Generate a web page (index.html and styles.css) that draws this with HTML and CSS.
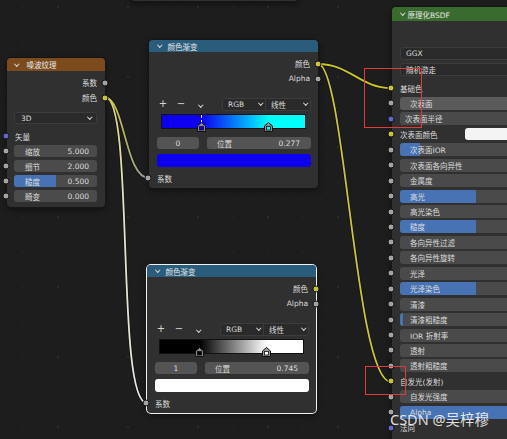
FILE: index.html
```html
<!DOCTYPE html>
<html>
<head>
<meta charset="utf-8">
<link rel="stylesheet" href="styles.css">
</head>
<body>
<div class="canvas">
  <svg class="links" width="507" height="439" viewBox="0 0 507 439">
    <defs>
      <linearGradient id="g1" gradientUnits="userSpaceOnUse" x1="105" y1="97" x2="149" y2="178">
        <stop offset="0" stop-color="#c9c626"/>
        <stop offset="1" stop-color="#9c9c9c"/>
      </linearGradient>
      <linearGradient id="g2" gradientUnits="userSpaceOnUse" x1="105" y1="97" x2="147" y2="403">
        <stop offset="0" stop-color="#d4d170"/>
        <stop offset="0.3" stop-color="#e4e2c4"/>
        <stop offset="1" stop-color="#e6e6e0"/>
      </linearGradient>
    </defs>
    <g class="wire-bg">
      <path d="M105,97 C125,100 125,178 149,178"/>
      <path d="M105,97 C135,97 115,403 147,403"/>
      <path d="M318,64 C350,64 360,88 391,88"/>
      <path d="M318,64 C345,64 355,382 391,382"/>
    </g>
    <path class="wire" stroke="url(#g1)" d="M105,97 C125,100 125,178 149,178"/>
    <path class="wire" stroke="url(#g2)" d="M105,97 C135,97 115,403 147,403"/>
    <path class="wire wire-y" d="M318,64 C350,64 360,88 391,88"/>
    <path class="wire wire-y" d="M318,64 C345,64 355,382 391,382"/>
  </svg>

  <div class="node stub"></div>

  <!-- Noise texture -->
  <div class="node noise">
    <div class="hdr h-tex"><span class="chev"></span>噪波纹理</div>
    <div class="nb nb-noise">
      <div class="sr out">系数<i class="sk g"></i></div>
      <div class="sr out">颜色<i class="sk y"></i></div>
      <div class="dd dd-noise"><span>3D</span><span class="chev"></span></div>
      <div class="sr in in-vec"><i class="sk p"></i>矢量</div>
      <div class="sr fr first"><i class="sk g"></i><div class="fld"><span>缩放</span><span>5.000</span></div></div>
      <div class="sr fr"><i class="sk g"></i><div class="fld"><span>细节</span><span>2.000</span></div></div>
      <div class="sr fr"><i class="sk g"></i><div class="fld"><i class="fill" style="width:50%"></i><span>糙度</span><span>0.500</span></div></div>
      <div class="sr fr"><i class="sk g"></i><div class="fld"><span>畸变</span><span>0.000</span></div></div>
    </div>
  </div>

  <!-- Color ramp 1 -->
  <div class="node ramp ramp1">
    <div class="hdr h-conv"><span class="chev"></span>颜色渐变</div>
    <div class="nb nb-ramp">
      <div class="sr out">颜色<i class="sk y"></i></div>
      <div class="sr out">Alpha<i class="sk g"></i></div>
      <div class="tb">
        <span class="tbb plus">+</span>
        <span class="tbb minus">−</span>
        <span class="tbb"><span class="chev"></span></span>
        <div class="ddg">
          <span class="seg seg1">RGB<span class="chev"></span></span>
          <span class="seg seg2">线性<span class="chev"></span></span>
        </div>
      </div>
      <div class="bar bar-blue">
        <i class="dash" style="left:27.7%"></i>
        <svg class="mk" style="left:27.7%" width="9" height="10" viewBox="0 0 9 10"><path d="M0.5,4 L4.5,0.5 L8.5,4 L8.5,9.5 L0.5,9.5 Z" fill="#8a8a8a" stroke="#111" stroke-width="1"/><rect x="2.5" y="4.5" width="4" height="3.5" fill="#0c00ee" stroke="#111" stroke-width="0.8"/></svg>
        <svg class="mk" style="left:74.5%" width="9" height="10" viewBox="0 0 9 10"><path d="M0.5,4 L4.5,0.5 L8.5,4 L8.5,9.5 L0.5,9.5 Z" fill="#8a8a8a" stroke="#111" stroke-width="1"/><rect x="2.5" y="4.5" width="4" height="3.5" fill="#00ffff" stroke="#111" stroke-width="0.8"/></svg>
      </div>
      <div class="vr">
        <div class="vf vidx">0</div>
        <div class="vf vpos"><span>位置</span><span>0.277</span></div>
      </div>
      <div class="sw sw-blue"></div>
      <div class="sr in in-fac"><i class="sk g"></i>系数</div>
    </div>
  </div>

  <!-- Color ramp 2 (active) -->
  <div class="node ramp ramp2">
    <div class="hdr h-conv"><span class="chev"></span>颜色渐变</div>
    <div class="nb nb-ramp">
      <div class="sr out">颜色<i class="sk y"></i></div>
      <div class="sr out">Alpha<i class="sk g"></i></div>
      <div class="tb">
        <span class="tbb plus">+</span>
        <span class="tbb minus">−</span>
        <span class="tbb"><span class="chev"></span></span>
        <div class="ddg">
          <span class="seg seg1">RGB<span class="chev"></span></span>
          <span class="seg seg2">线性<span class="chev"></span></span>
        </div>
      </div>
      <div class="bar bar-bw">
        <i class="dash" style="left:74.5%"></i>
        <svg class="mk" style="left:27.7%" width="9" height="10" viewBox="0 0 9 10"><path d="M0.5,4 L4.5,0.5 L8.5,4 L8.5,9.5 L0.5,9.5 Z" fill="#8a8a8a" stroke="#111" stroke-width="1"/><rect x="2.5" y="4.5" width="4" height="3.5" fill="#000" stroke="#111" stroke-width="0.8"/></svg>
        <svg class="mk" style="left:74.5%" width="9" height="10" viewBox="0 0 9 10"><path d="M0.5,4 L4.5,0.5 L8.5,4 L8.5,9.5 L0.5,9.5 Z" fill="#9a9a9a" stroke="#111" stroke-width="1"/><rect x="2.5" y="4.5" width="4" height="3.5" fill="#fff" stroke="#111" stroke-width="0.8"/></svg>
      </div>
      <div class="vr">
        <div class="vf vidx">1</div>
        <div class="vf vpos"><span>位置</span><span>0.745</span></div>
      </div>
      <div class="sw sw-white"></div>
      <div class="sr in in-fac"><i class="sk g"></i>系数</div>
    </div>
  </div>

  <!-- Principled BSDF -->
  <div class="node bsdf">
    <div class="hdr h-shader"><span class="chev"></span>原理化BSDF</div>
    <div class="nb nb-bsdf">
      <div class="dd dd-bsdf"><span>GGX</span></div>
      <div class="dd dd-bsdf dd-2"><span>随机游走</span></div>
      <div class="rows">
        <div class="br lab"><i class="sk y"></i>基础色</div>
        <div class="br"><i class="sk g"></i><div class="bf hov"><span>次表面</span></div></div>
        <div class="br"><i class="sk p"></i><div class="bf vec"><span>次表面半径</span></div></div>
        <div class="br lab"><i class="sk y"></i>次表面颜色<i class="bsw"></i></div>
        <div class="br"><i class="sk g"></i><div class="bf"><i class="fill" style="width:13%"></i><span>次表面IOR</span></div></div>
        <div class="br"><i class="sk g"></i><div class="bf"><span>次表面各向异性</span></div></div>
        <div class="br"><i class="sk g"></i><div class="bf"><span>金属度</span></div></div>
        <div class="br"><i class="sk g"></i><div class="bf"><i class="fill" style="width:50%"></i><span>高光</span></div></div>
        <div class="br"><i class="sk g"></i><div class="bf"><span>高光染色</span></div></div>
        <div class="br"><i class="sk g"></i><div class="bf"><i class="fill" style="width:50%"></i><span>糙度</span></div></div>
        <div class="br"><i class="sk g"></i><div class="bf"><span>各向异性过滤</span></div></div>
        <div class="br"><i class="sk g"></i><div class="bf"><span>各向异性旋转</span></div></div>
        <div class="br"><i class="sk g"></i><div class="bf"><span>光泽</span></div></div>
        <div class="br"><i class="sk g"></i><div class="bf"><i class="fill" style="width:50%"></i><span>光泽染色</span></div></div>
        <div class="br"><i class="sk g"></i><div class="bf"><span>清漆</span></div></div>
        <div class="br"><i class="sk g"></i><div class="bf"><i class="fill" style="width:2%"></i><span>清漆粗糙度</span></div></div>
        <div class="br"><i class="sk g"></i><div class="bf"><span>IOR 折射率</span></div></div>
        <div class="br"><i class="sk g"></i><div class="bf"><span>透射</span></div></div>
        <div class="br"><i class="sk g"></i><div class="bf"><span>透射粗糙度</span></div></div>
        <div class="br lab"><i class="sk y"></i>自发光(发射)</div>
        <div class="br"><i class="sk g"></i><div class="bf"><span>自发光强度</span></div></div>
        <div class="br"><i class="sk g"></i><div class="bf"><i class="fill" style="width:100%"></i><span>Alpha</span></div></div>
        <div class="br lab"><i class="sk p"></i>法向</div>
      </div>
    </div>
  </div>

  <div class="mark mark1"></div>
  <div class="mark mark2"></div>

  <div class="wm">CSDN @吴梓穆</div>
</div>
</body>
</html>
```

FILE: styles.css
```css
* { box-sizing: border-box; margin: 0; padding: 0; }

body {
  background: #1d1d1d;
  font-family: "DejaVu Sans", "Noto Sans CJK SC", sans-serif;
  font-size: 7.5px;
  color: #dcdcdc;
  overflow: hidden;
}

.canvas {
  position: relative;
  width: 507px;
  height: 439px;
  overflow: hidden;
  background-color: #1d1d1d;
  background-image:
    radial-gradient(circle at center, #2b2b2b 0, #2b2b2b 1px, transparent 1.6px),
    radial-gradient(circle at center, #232323 0, #232323 0.6px, transparent 1.1px);
  background-size: 70px 70px, 17.5px 17.5px;
  background-position: 93px -28px, 119.25px -1.75px;
}

/* links */
.links { position: absolute; left: 0; top: 0; z-index: 1; }
.wire-bg path { fill: none; stroke: #121212; stroke-width: 3.4; }
.wire { fill: none; stroke-width: 1.8; }
.wire-y { stroke: #cbc727; }

/* nodes */
.node {
  position: absolute;
  z-index: 2;
  background: #303030;
  border-radius: 4px;
  box-shadow: 0 0 0 1px #161616, 0 2px 6px rgba(0, 0, 0, 0.55);
}

.stub { left: 131px; top: -12px; width: 167px; height: 13px; }

.hdr {
  display: flex;
  align-items: center;
  border-radius: 4px 4px 0 0;
  color: #e6e6e6;
  white-space: nowrap;
}

.chev {
  display: inline-block;
  width: 3.5px;
  height: 3.5px;
  border-right: 1px solid #d8d8d8;
  border-bottom: 1px solid #d8d8d8;
  transform: translateY(-1px) rotate(45deg);
}
.hdr .chev { margin-right: 6px; }

.h-tex { background: #7b4a1d; height: 13px; padding-left: 8px; }
.h-conv { background: #2a5d7c; height: 12px; padding-left: 9px; }
.h-shader { background: #3a6b2e; height: 14px; padding-left: 9px; }
.h-shader .chev { margin-right: 3px; }
.h-tex .chev { margin-right: 8px; }

.nb { display: flex; flex-direction: column; }

/* socket rows */
.sr {
  position: relative;
  display: flex;
  align-items: center;
  white-space: nowrap;
}
.sr.out { justify-content: flex-end; height: 15px; padding-right: 8px; }
.sr.in { padding-left: 8px; }

.sk {
  position: absolute;
  top: 50%;
  width: 7px;
  height: 7px;
  border-radius: 50%;
  border: 1px solid #151515;
  transform: translate(-50%, -50%);
}
.sr.out .sk { right: -7px; }
.sr.in .sk, .sr.fr .sk { left: -1px; }
.sk.g { background: #a3a3a3; }
.sk.y { background: #c9c62a; }
.sk.p { background: #6464cc; }

/* dropdown */
.dd {
  display: flex;
  align-items: center;
  justify-content: space-between;
  background: #2a2a2a;
  border: 1px solid #3c3c3c;
  border-radius: 3px;
  color: #dcdcdc;
}
.dd-noise { margin: 7px 8px 0 7px; height: 12px; padding: 0 5px 0 6px; }

/* noise node */
.noise { left: 7px; top: 58px; width: 98px; }
.nb-noise { padding: 4px 0 5px; }
.in-vec { margin-top: 5px; height: 14px; }
.sr.fr { height: 12px; margin-top: 3px; padding: 0 8px 0 7px; }
.sr.fr.first { margin-top: 2px; }

.fld {
  position: relative;
  flex: 1;
  height: 12px;
  background: #4b4b4b;
  border-radius: 3px;
  display: flex;
  align-items: center;
  justify-content: space-between;
  padding: 0 8px 0 11px;
  overflow: hidden;
}
.fld span, .bf span, .vf span { position: relative; }
.fill {
  position: absolute;
  left: 0;
  top: 0;
  bottom: 0;
  background: #4772b3;
}

/* color ramp */
.ramp { width: 169px; }
.ramp1 { left: 149px; top: 40px; }
.ramp2 { left: 147px; top: 265px; box-shadow: 0 0 0 1px #f2f2f2, 0 2px 6px rgba(0, 0, 0, 0.55); }
.nb-ramp { padding: 4px 0 3px; }

.tb {
  display: flex;
  align-items: center;
  height: 14px;
  margin-top: 11px;
  padding-left: 8px;
}
.tbb {
  width: 12px;
  text-align: center;
  font-size: 10px;
  color: #d6d6d6;
  line-height: 14px;
}
.tbb.minus { margin-left: 6px; }
.tbb:nth-child(3) { margin-left: 8px; }
.ddg {
  display: flex;
  margin-left: 15px;
  height: 13px;
  background: #2a2a2a;
  border: 1px solid #3c3c3c;
  border-radius: 3px;
}
.seg {
  display: flex;
  align-items: center;
  justify-content: space-between;
  padding: 0 3px 0 5px;
}
.seg1 { width: 43px; border-right: 1px solid #3c3c3c; }
.seg2 { width: 44px; }

.bar {
  position: relative;
  height: 15px;
  margin: 3px 12px 0 12px;
  border: 1px solid #111;
}
.bar-blue { background: linear-gradient(to right, #0c00ee 0, #0c00ee 27.7%, #00ffff 74.5%, #00ffff 100%); }
.bar-bw { background: linear-gradient(to right, #000 0, #000 27.7%, #fff 74.5%, #fff 100%); }
.dash {
  position: absolute;
  top: 0;
  height: 8px;
  width: 0;
  border-left: 1px dashed #f0f0f0;
  margin-left: -0.5px;
}
.mk { position: absolute; top: 7px; margin-left: -4.5px; }

.vr {
  display: flex;
  gap: 8px;
  margin: 8px 7px 0 8px;
  height: 12px;
}
.vf {
  height: 12px;
  background: #545454;
  border-radius: 3px;
  display: flex;
  align-items: center;
}
.vidx { width: 42px; justify-content: center; }
.vpos { flex: 1; justify-content: space-between; padding: 0 11px 0 10px; }

.sw {
  height: 13px;
  margin: 5px 7px 0 8px;
  border-radius: 3px;
}
.sw-blue { background: #0c00ee; }
.sw-white { background: #ffffff; }

.in-fac { margin-top: 4px; height: 14px; }

/* BSDF */
.bsdf { left: 392px; top: 7px; width: 172px; height: 460px; }
.nb-bsdf { padding-top: 26px; }
.dd-bsdf { margin: 0 12px 0 8px; height: 13px; padding-left: 5px; }
.dd-2 { margin-top: 3px; }
.rows { margin-top: 4.3px; display: flex; flex-direction: column; }
.br {
  position: relative;
  height: 15.45px;
  display: flex;
  align-items: center;
  padding: 0 12px 0 8px;
  white-space: nowrap;
  color: #dcdcdc;
}
.br .sk { left: -1px; }
.bf {
  position: relative;
  flex: 1;
  height: 13px;
  background: #4a4a4a;
  border-radius: 3px;
  display: flex;
  align-items: center;
  padding-left: 10px;
  overflow: hidden;
}
.bf.hov { background: #5a5a5a; }
.bf.vec { padding-left: 5px; }
.bsw {
  position: absolute;
  left: 73px;
  top: 1px;
  width: 87px;
  height: 12px;
  background: #f4f4f4;
  border-radius: 3px;
}

/* annotation rectangles */
.mark {
  position: absolute;
  z-index: 5;
  border: 1px solid #e23a3a;
}
.mark1 { left: 364px; top: 68px; width: 58px; height: 60px; }
.mark2 { left: 365px; top: 366px; width: 41px; height: 29px; }

/* watermark */
.wm {
  position: absolute;
  z-index: 6;
  left: 390px;
  top: 410px;
  font-family: "Noto Sans", "Noto Sans CJK SC", sans-serif;
  font-size: 14.5px;
  line-height: 18px;
  color: rgba(255, 255, 255, 0.85);
  white-space: nowrap;
}
```
